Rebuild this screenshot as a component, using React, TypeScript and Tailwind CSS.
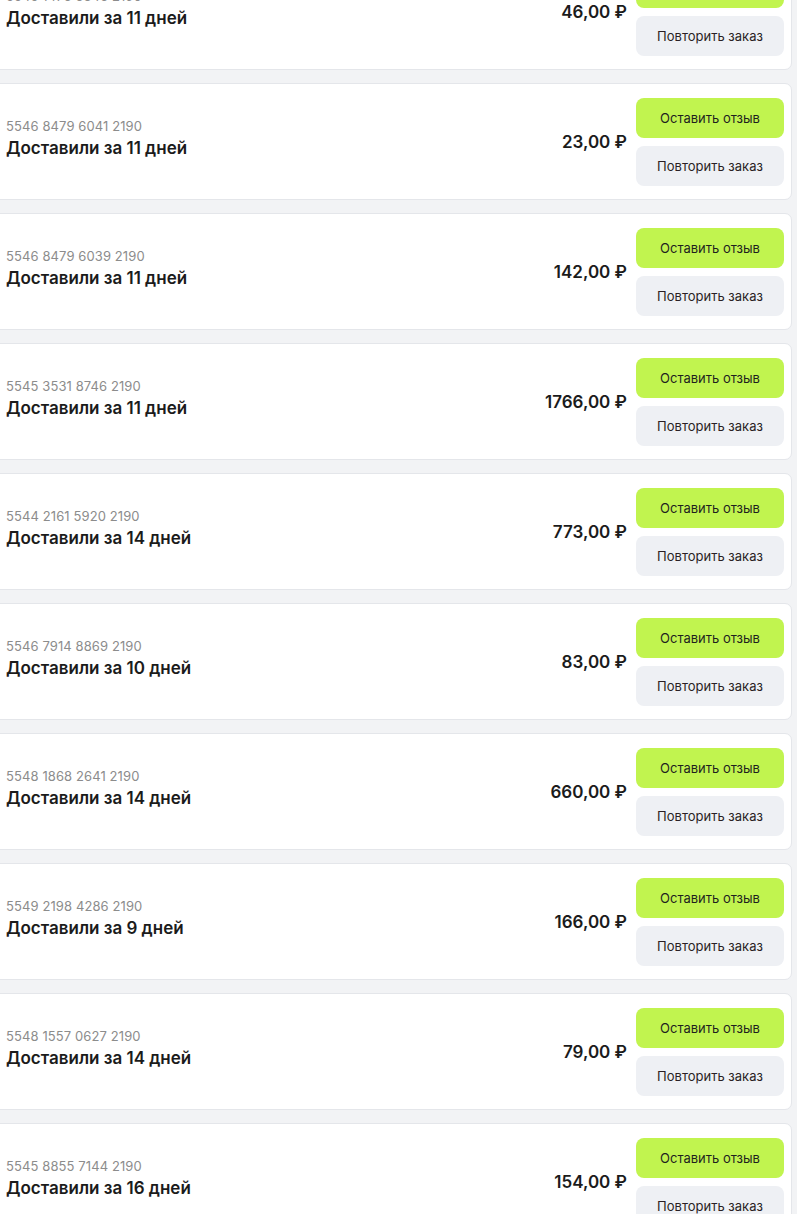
import React from "react";

interface Order {
  id: string;
  days: number;
  price: string;
}

const orders: Order[] = [
  { id: "5545 1476 6346 2190", days: 11, price: "46,00" },
  { id: "5546 8479 6041 2190", days: 11, price: "23,00" },
  { id: "5546 8479 6039 2190", days: 11, price: "142,00" },
  { id: "5545 3531 8746 2190", days: 11, price: "1766,00" },
  { id: "5544 2161 5920 2190", days: 14, price: "773,00" },
  { id: "5546 7914 8869 2190", days: 10, price: "83,00" },
  { id: "5548 1868 2641 2190", days: 14, price: "660,00" },
  { id: "5549 2198 4286 2190", days: 9, price: "166,00" },
  { id: "5548 1557 0627 2190", days: 14, price: "79,00" },
  { id: "5545 8855 7144 2190", days: 16, price: "154,00" },
];

const OrderCard: React.FC<{ order: Order }> = ({ order }) => {
  return (
    <div className="flex items-center bg-white border border-[#e4e6ea] rounded-[7px] pl-[13px] pr-[7px] pt-[14px] pb-[13px]">
      <div className="flex flex-col flex-1 min-w-0 mb-[7px]">
        <span className="text-[13px] leading-[16px] text-[#8c8c8c] tracking-[0.1px]">{order.id}</span>
        <span className="text-[17px] leading-[22px] font-semibold text-[#1b1b1b] mt-[3px]">
          Доставили за {order.days} дней
        </span>
      </div>
      <div className="text-[17px] font-semibold text-[#1b1b1b] mr-[9px] mt-[2px] whitespace-nowrap">
        {order.price} ₽
      </div>
      <div className="flex flex-col gap-2 w-[148px]">
        <button className="h-10 rounded-lg bg-[#c1f44f] text-[13px] text-[#1f1f1f] pt-px">
          Оставить отзыв
        </button>
        <button className="h-10 rounded-lg bg-[#eef0f4] text-[13px] text-[#2a1f24] pt-px">
          Повторить заказ
        </button>
      </div>
    </div>
  );
};

export default function App() {
  return (
    <div
      className="w-[797px] h-[1214px] overflow-hidden bg-[#f2f3f5]"
      style={{ fontFamily: "Inter, 'Noto Sans', sans-serif" }}
    >
      <div className="flex flex-col gap-[13px] -ml-2 mr-[5px] -mt-[47px]">
        {orders.map((order, index) => (
          <OrderCard key={index} order={order} />
        ))}
      </div>
    </div>
  );
}
